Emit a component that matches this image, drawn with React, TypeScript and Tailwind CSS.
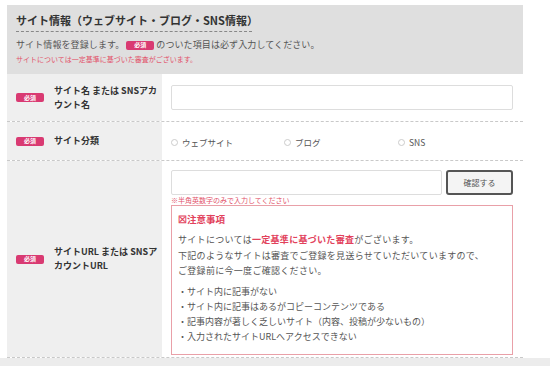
import React from "react";

const Badge = () => (
  <span className="inline-flex items-center justify-center w-[28px] h-[9px] rounded-[2px] bg-[#d93a72] text-white text-[6px] leading-none font-bold">
    必須
  </span>
);

const Radio = ({ label }: { label: string }) => (
  <label className="flex items-center gap-[4px] text-[8.5px] text-[#555]">
    <span className="w-[7px] h-[7px] rounded-full border border-[#ccc] bg-white" />
    {label}
  </label>
);

const Row = ({
  label,
  height,
  children,
}: {
  label: React.ReactNode;
  height: string;
  children: React.ReactNode;
}) => (
  <div className={`flex border-b border-dashed border-[#c9c9c9] ${height}`}>
    <div className="w-[155px] shrink-0 bg-[#efefef] flex items-center pl-[9px] gap-[10px]">
      <Badge />
      <p className="text-[9px] leading-[14px] font-bold text-[#333] w-[108px] break-all">{label}</p>
    </div>
    <div className="flex-1 bg-white pl-[9px] pr-[10px]">{children}</div>
  </div>
);

const App = () => {
  return (
    <div
      className="w-[550px] h-[366px] bg-white overflow-hidden"
      style={{ fontFamily: '"Noto Sans CJK JP", "Noto Sans", sans-serif' }}
    >
      <div className="ml-[7px] mt-[5px] w-[516px]">
        {/* ヘッダー */}
        <div className="bg-[#dfdfdf] px-[9px] pt-[8px] pb-[9px] h-[69px]">
          <h2 className="text-[11px] leading-[14px] font-bold text-[#333] pb-[4px] border-b border-dashed border-[#888] w-[236px] whitespace-nowrap">
            サイト情報（ウェブサイト・ブログ・SNS情報）
          </h2>
          <p className="mt-[6px] text-[9px] leading-[14px] text-[#555] flex items-center gap-[2px] tracking-[0.1px]">
            サイト情報を登録します。
            <Badge />
            のついた項目は必ず入力してください。
          </p>
          <p className="mt-[1px] text-[7px] leading-[12px] text-[#e2526a]">
            サイトについては一定基準に基づいた審査がございます。
          </p>
        </div>

        <Row height="h-[48px]" label="サイト名 または SNSアカウント名">
          <div className="h-full flex items-center">
            <input className="w-full h-[25px] border border-[#ddd] rounded-[2px] bg-white" />
          </div>
        </Row>

        <Row height="h-[39px]" label="サイト分類">
          <div className="h-full flex items-center pt-[2px]">
            <div className="w-[113px]">
              <Radio label="ウェブサイト" />
            </div>
            <div className="w-[114px]">
              <Radio label="ブログ" />
            </div>
            <Radio label="SNS" />
          </div>
        </Row>

        <Row height="h-[197px]" label="サイトURL または SNSアカウントURL">
          <div className="pt-[9px]">
            <div className="flex gap-[4px]">
              <input className="w-[271px] h-[25px] border border-[#ddd] rounded-[2px] bg-white" />
              <button className="w-[67px] h-[25px] rounded-[3px] border-2 border-[#555] bg-[#f4f4f4] text-[8px] text-[#555]">
                確認する
              </button>
            </div>
            <p className="text-[7px] leading-[10px] text-[#e2526a]">
              ※半角英数字のみで入力してください
            </p>
            <div className="border border-[#e9a0a8] px-[6px] pt-[5px] h-[150px]">
              <p className="text-[9.5px] leading-[16px] font-bold text-[#e2425c]">☒注意事項</p>
              <div className="mt-[5px] text-[9px] leading-[15.5px] text-[#555] tracking-[0.3px]">
                <p>
                  サイトについては
                  <span className="font-bold text-[#e2425c]">一定基準に基づいた審査</span>
                  がございます。
                </p>
                <p>下記のようなサイトは審査でご登録を見送らせていただいていますので、</p>
                <p>ご登録前に今一度ご確認ください。</p>
                <ul className="mt-[5px] leading-[15px] tracking-normal">
                  <li>・サイト内に記事がない</li>
                  <li>・サイト内に記事はあるがコピーコンテンツである</li>
                  <li>・記事内容が著しく乏しいサイト（内容、投稿が少ないもの）</li>
                  <li>・入力されたサイトURLへアクセスできない</li>
                </ul>
              </div>
            </div>
          </div>
        </Row>
      </div>
      <div className="bg-[#ececec] h-[20px]" />
    </div>
  );
};

export default App;
